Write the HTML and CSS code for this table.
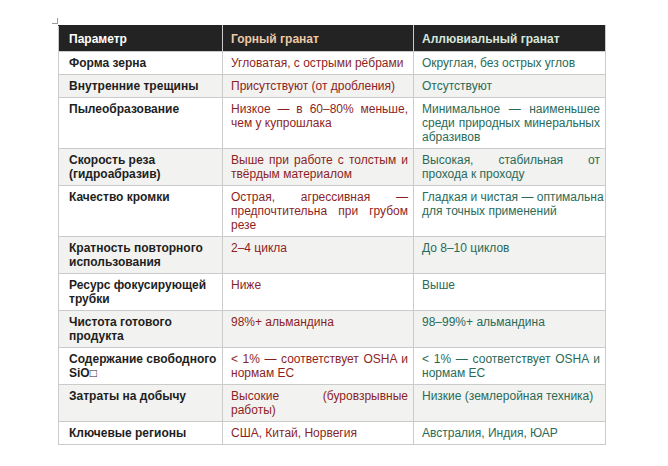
FILE: index.html
```html
<!DOCTYPE html>
<html lang="ru">
<head>
<meta charset="utf-8">
<title>Горный и аллювиальный гранат</title>
<link rel="stylesheet" href="styles.css">
</head>
<body>
<div class="sheet">
  <table class="cmp">
    <colgroup>
      <col class="c1"><col class="c2"><col class="c3">
    </colgroup>
    <thead>
      <tr>
        <th class="h1">Параметр</th>
        <th class="h2">Горный гранат</th>
        <th class="h3">Аллювиальный гранат</th>
      </tr>
    </thead>
    <tbody>
      <tr><td class="p">Форма зерна</td><td class="r">Угловатая, с острыми рёбрами</td><td class="g">Округлая, без острых углов</td></tr>
      <tr><td class="p">Внутренние трещины</td><td class="r">Присутствуют (от дробления)</td><td class="g">Отсутствуют</td></tr>
      <tr><td class="p">Пылеобразование</td><td class="r">Низкое — в 60–80% меньше, чем у купрошлака</td><td class="g">Минимальное — наименьшее среди природных минеральных абразивов</td></tr>
      <tr><td class="p">Скорость реза (гидроабразив)</td><td class="r">Выше при работе с толстым и твёрдым материалом</td><td class="g">Высокая, стабильная от прохода к проходу</td></tr>
      <tr><td class="p">Качество кромки</td><td class="r">Острая, агрессивная — предпочтительна при грубом резе</td><td class="g"><span class="nw">Гладкая и чистая — оптимальна</span> для точных применений</td></tr>
      <tr><td class="p">Кратность повторного использования</td><td class="r">2–4 цикла</td><td class="g">До 8–10 циклов</td></tr>
      <tr><td class="p">Ресурс фокусирующей трубки</td><td class="r">Ниже</td><td class="g">Выше</td></tr>
      <tr><td class="p">Чистота готового продукта</td><td class="r">98%+ альмандина</td><td class="g">98–99%+ альмандина</td></tr>
      <tr><td class="p">Содержание свободного SiO&#x25A1;</td><td class="r">&lt; 1% — соответствует OSHA и нормам ЕС</td><td class="g">&lt; 1% — соответствует OSHA и нормам ЕС</td></tr>
      <tr><td class="p">Затраты на добычу</td><td class="r">Высокие (буровзрывные работы)</td><td class="g">Низкие (землеройная техника)</td></tr>
      <tr><td class="p">Ключевые регионы</td><td class="r">США, Китай, Норвегия</td><td class="g">Австралия, Индия, ЮАР</td></tr>
    </tbody>
  </table>
</div>
</body>
</html>
```

FILE: styles.css
```css
html, body {
  margin: 0;
  padding: 0;
  background: #ffffff;
}

body {
  font-family: "Liberation Sans", Arial, sans-serif;
  font-size: 12px;
  line-height: 14px;
}

.sheet {
  position: relative;
  width: 547px;
  margin: 25px 0 0 58px;
}

.sheet::before {
  content: "";
  position: absolute;
  left: -6px;
  top: -7px;
  width: 5px;
  height: 5px;
  border-right: 1px solid #9a9a9a;
  border-bottom: 1px solid #9a9a9a;
}

.sheet::after {
  content: "";
  position: absolute;
  right: -4px;
  bottom: -5px;
  width: 3px;
  height: 4px;
  border-left: 1px solid #9a9a9a;
  border-top: 1px solid #9a9a9a;
}

.cmp {
  width: 547px;
  table-layout: fixed;
  border-collapse: collapse;
}

.c1 { width: 164px; }
.c2 { width: 191px; }
.c3 { width: 192px; }

.cmp th,
.cmp td {
  border: 1px solid #cbcbcb;
  vertical-align: top;
  padding: 4px 5px 4px 8px;
}

.cmp th {
  background: #232323;
  font-weight: bold;
  text-align: left;
  padding-top: 6px;
  padding-bottom: 5px;
  border-top-color: #232323;
}

.cmp th.h1 {
  color: #ffffff;
  padding-left: 10px;
  border-left-color: #c8c8c8;
}

.cmp th.h2 { color: #ecc9a7; }
.cmp th.h3 { color: #d7e6da; }

.cmp tbody tr:nth-child(even) td {
  background: #f2f2f0;
}

.cmp td.p {
  font-weight: bold;
  color: #1e1e1e;
  padding-left: 10px;
}

.cmp td.r {
  color: #8c1f1f;
  text-align: justify;
}

.cmp td.g {
  color: #2a6b58;
  text-align: justify;
}

.nw {
  white-space: nowrap;
}
```
